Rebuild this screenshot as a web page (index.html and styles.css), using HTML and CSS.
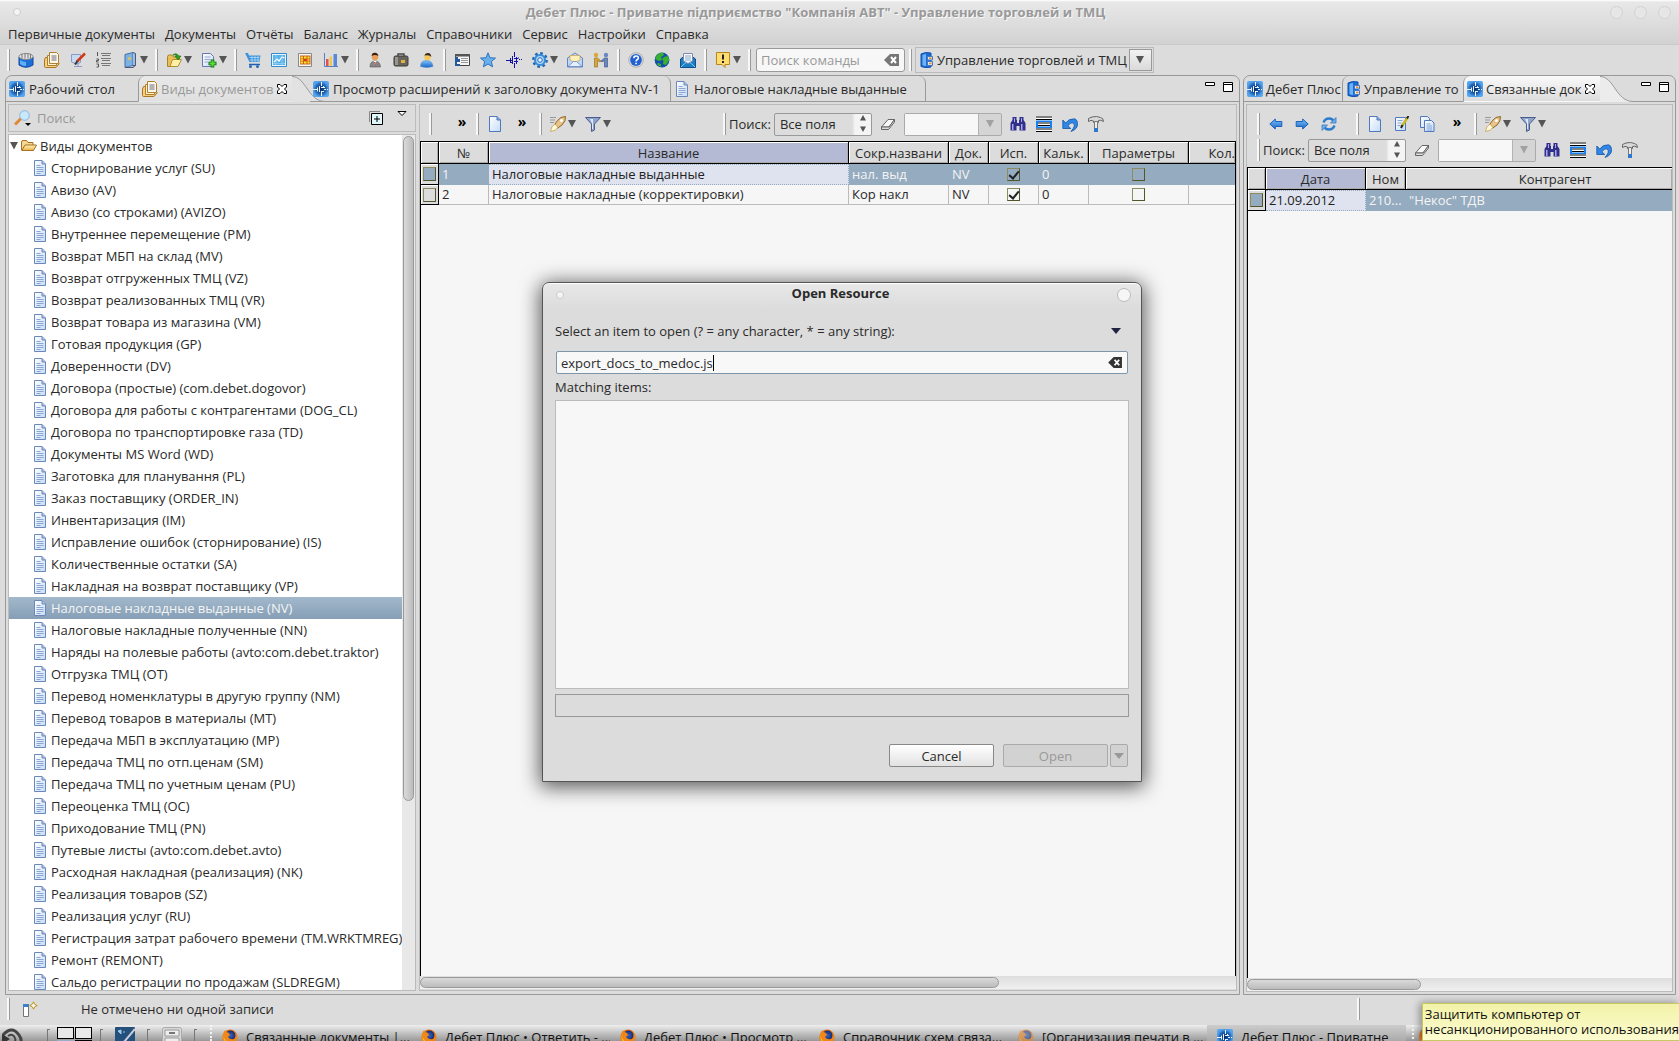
FILE: index.html
```html
<!DOCTYPE html>
<html lang="ru">
<head>
<meta charset="utf-8">
<title>Дебет Плюс - Управление торговлей и ТМЦ</title>
<link rel="stylesheet" href="styles.css">
</head>
<body>
<svg class="sprite" aria-hidden="true">
  <defs>
    <linearGradient id="g-blue" x1="0" y1="0" x2="0" y2="1"><stop offset="0" stop-color="#7cc4fa"/><stop offset="1" stop-color="#1a62c8"/></linearGradient>
    <linearGradient id="g-page" x1="0" y1="0" x2="1" y2="1"><stop offset="0" stop-color="#ffffff"/><stop offset="1" stop-color="#c4dcf8"/></linearGradient>
    <linearGradient id="g-gold" x1="0" y1="0" x2="0" y2="1"><stop offset="0" stop-color="#fff3c0"/><stop offset="1" stop-color="#e8b248"/></linearGradient>
    <radialGradient id="g-logo"><stop offset="0" stop-color="#0a2c66"/><stop offset=".6" stop-color="#1d5fb0"/><stop offset="1" stop-color="#55a4ee"/></radialGradient>
    <radialGradient id="g-fox"><stop offset="0" stop-color="#3c62c0"/><stop offset="1" stop-color="#152a6c"/></radialGradient>
  </defs>
  <symbol id="i-logo" viewBox="0 0 16 16"><rect width="16" height="16" rx="2" fill="url(#g-logo)"/><path d="M8.500 1v4M8.500 11v4M0 8.500h5M6.500 5v6M4.500 6.500v4M11 8.500h2M14 8.500h1M8 6.500h4M8 10.500h3M10.500 5v2" stroke="#e8f4ff" stroke-width="1" fill="none"/></symbol>
  <symbol id="i-drum" viewBox="0 0 16 16"><path d="M1 5v8q7 4.500 14 0V5z" fill="#1b6fd6" stroke="#0d47a0"/><path d="M2 8q3 2 6 2v4q-4 0-6-2z" fill="#5fb0f6"/><ellipse cx="8" cy="4.500" rx="7" ry="3" fill="#e4e4e4" stroke="#888"/><path d="M4 2v4M7 1.500v5M10 1.500v5M12.500 2v4" stroke="#777"/></symbol>
  <symbol id="i-docs" viewBox="0 0 16 16"><path d="M3.500 5.500H1.500L.5 8v6.500q0 1 1 1h10.500l3.500-4" fill="#f7cf7c" stroke="#a8762a"/><path d="M3.500 3.500h3v8h6v2h-9z" fill="#fff0d0" stroke="#b08030"/><path d="M5.500.5h7l2 2v9h-9z" fill="#fff8e8" stroke="#b08030"/><path d="M7.500 4h5M7.500 6h5M7.500 8h5" stroke="#6a6a80"/></symbol>
  <symbol id="i-edit" viewBox="0 0 16 16"><path d="M1.500 2.500h9v8l-4 1.500-5-2z" fill="#c8daf2" stroke="#8a9cc8"/><path d="M4 14.500h8M8 11v3" stroke="#8a9cc8"/><path d="M15 1.500L7 9.500" stroke="#d03818" stroke-width="2.500"/><path d="M7.500 9L5 12.500" stroke="#333" stroke-width="2"/></symbol>
  <symbol id="i-list" viewBox="0 0 16 16"><path d="M5 1.500h10M6 3.500h8M5 6.500h10M6 8.500h8M5 11.500h10M6 13.500h8" stroke="#777"/><path d="M1.500 0v4M.5 7h2v1.500h-2V10h2M.5 12h2v3h-2" stroke="#555" fill="none"/></symbol>
  <symbol id="i-book" viewBox="0 0 16 16"><path d="M3 2.500l8-2v13l-8 2z" fill="#7fb2e0" stroke="#3a6ea8"/><path d="M11 .5l2.500 1v12l-2.500 0M3 15.500h8l2.500-2" fill="#9cc0e4" stroke="#557"/><circle cx="7.500" cy="6.500" r="1.600" fill="#e8c050"/></symbol>
  <symbol id="i-open" viewBox="0 0 16 16"><path d="M1.500 4.500q0-1.500 2-1.500h3l1 2h6v3l-9 6.500h-3z" fill="#e9bf55" stroke="#a8842c"/><path d="M4 14.500l2.500-7h9l-3.500 7z" fill="#fff0a8" stroke="#b09030"/><path d="M7 3q3-3 6 1h2l-3 4-3-4h2q-2-2-4-1z" fill="#30a020" stroke="#187010" stroke-width=".6"/></symbol>
  <symbol id="i-new" viewBox="0 0 16 16"><path d="M1.500 1.500h8l3 3v10h-11z" fill="url(#g-page)" stroke="#6878b0"/><path d="M3.500 5h6M3.500 7.500h6M3.500 10h4" stroke="#98a8d0"/><path d="M11.500 7.500v8M7.500 11.500h8" stroke="#157010" stroke-width="3.600"/><path d="M11.500 8.500v6M8.500 11.500h6" stroke="#58dc40" stroke-width="2"/></symbol>
  <symbol id="i-cart" viewBox="0 0 16 16"><path d="M0 1h3l1 2.500h11.500l-1 6.500H4.500z" fill="#3f92da"/><path d="M4.500 5.500h10M5 8h9.500M7 4v6M10 4v6M13 4v6" stroke="#bfe2fa" stroke-width=".7"/><path d="M4 12.500h11" stroke="#1c62b0" stroke-width="1.500"/><circle cx="5.500" cy="14.500" r="1.500" fill="#2a6ab8"/><circle cx="12.500" cy="14.500" r="1.500" fill="#2a6ab8"/></symbol>
  <symbol id="i-chart" viewBox="0 0 16 16"><path d="M.5 1.500h15v13H.5z" fill="#e4f4fe" stroke="#3a8ad0"/><path d="M2 3h12v10H2z" fill="#5ab4ec"/><path d="M3 10l3-3 2 2 3-4 2.500 1" stroke="#fff" fill="none" stroke-width="1.200"/><path d="M2 11.500h12M5 3v10M11 3v10" stroke="#a4d8f8" fill="none" stroke-width=".6"/></symbol>
  <symbol id="i-grid" viewBox="0 0 16 16"><path d="M1.500 1.500h13v13h-13z" fill="#f8f8f8" stroke="#888"/><path d="M3 3.500h10.500v9H3z" fill="#c86018"/><path d="M3.500 4.500h2.500v2H3.500zM7 4.500h2.500v2H7zM10.500 4.500h2v2h-2zM3.500 9.500h2.500v2H3.500zM7 9.500h2.500v2H7zM10.500 9.500h2v2h-2z" fill="#ffe030"/><path d="M3.500 7.300h2.500v1.400H3.500zM10.500 7.300h2v1.400h-2z" fill="#ffe030"/><path d="M7 7.300h2.500v1.400H7z" fill="#e02818"/></symbol>
  <symbol id="i-bars" viewBox="0 0 16 16"><path d="M1.500 1v13.500H15" stroke="#5a80c0" fill="none"/><path d="M3 7h2.500v7H3z" fill="#e05050"/><path d="M6.500 4.500H9V14H6.500z" fill="#f0c850"/><path d="M10.500 2h3.500v12h-3.500z" fill="#5888d8"/></symbol>
  <symbol id="i-man" viewBox="0 0 16 16"><path d="M3 15q0-6 5-6t5.500 6z" fill="#868686" stroke="#555" stroke-width=".6"/><path d="M6.500 9h3L8 13z" fill="#fff"/><circle cx="8" cy="5" r="3.300" fill="#e8a058"/><path d="M4.600 4Q5 .5 8 .8t3.400 3.200Q8 2 4.600 4z" fill="#3a2010"/><path d="M7 10h1.500v4z" fill="#c03020"/></symbol>
  <symbol id="i-bag" viewBox="0 0 16 16"><path d="M5 4V2h6v2" fill="none" stroke="#444" stroke-width="1.400"/><rect x="1" y="4" width="14" height="10" rx="1.500" fill="#68645e" stroke="#3c3a38"/><path d="M2 5h3v8H2z" fill="#99958c"/><path d="M8 8h4v3H8z" fill="#e0b040"/></symbol>
  <symbol id="i-user" viewBox="0 0 16 16"><path d="M1.500 14.500q0-6 6-6t6.500 6q-6 2-12.500 0z" fill="url(#g-blue)" stroke="#5590c8" stroke-width=".6"/><circle cx="8.500" cy="5" r="3.200" fill="#f4c858"/><path d="M5.500 3.500Q6 1 9 1t3.300 4Q11 2.500 5.500 3.500z" fill="#352a20"/></symbol>
  <symbol id="i-form" viewBox="0 0 16 16"><path d="M1.500 2.500h14v11h-14z" fill="#f4f4f4" stroke="#444"/><path d="M1 2h15v2.500H1z" fill="#555"/><path d="M7 6.500h7M7 8.500h7M7 10.500h7" stroke="#999"/><path d="M1 5h3v2h2v3H3v2h3v2H1z" fill="#28589c"/></symbol>
  <symbol id="i-star" viewBox="0 0 16 16"><path d="M8 .8l2 5 5.500.3-4.200 3.500 1.300 5.200L8 12l-4.600 2.800 1.300-5.200L.5 6.100 6 5.800z" fill="#6ab0ec" stroke="#2c72bc"/></symbol>
  <symbol id="i-pulse" viewBox="0 0 16 16"><path d="M8.500 0v5M8.500 11v5M0 8.500h6M4.500 6v5M6.500 4v8M10.500 5v7M8 6.500h4M8 9.500h4M13 7.500h1M15 7.500h1M5 10.500h2M12.500 5.500v1" stroke="#1414a0" fill="none"/></symbol>
  <symbol id="i-gear" viewBox="0 0 16 16"><circle cx="8" cy="8" r="6.600" fill="none" stroke="#1c66b4" stroke-width="2.600" stroke-dasharray="2.600 2.580"/><circle cx="8" cy="8" r="5" fill="#b4dcfa" stroke="#3a8cd8" stroke-width="2.200"/><circle cx="8" cy="8" r="2.300" fill="#e8f4ff" stroke="#1c66b4"/></symbol>
  <symbol id="i-mail" viewBox="0 0 16 16"><path d="M.5 6L8 1l7.500 5v9H.5z" fill="#bcd8f8" stroke="#6484c4"/><path d="M3 3.500h10V8L8 10.500 3 8z" fill="#fff0b8" stroke="#c8a050" stroke-width=".7"/><path d="M1 14.500L6.500 9.500h3l5.500 5z" fill="#e4f0fe" stroke="#6484c4" stroke-width=".8"/></symbol>
  <symbol id="i-people" viewBox="0 0 16 16"><circle cx="3" cy="3" r="2.200" fill="#d8a838"/><circle cx="13" cy="3" r="2.200" fill="#6888c0"/><path d="M1.500 6h3l3.500 3-1 1-2.500-1.500V15h-3z" fill="#d8a838" stroke="#8a6818" stroke-width=".6"/><path d="M14.500 6h-3L8 9l1 1 2.500-1.500V15h3z" fill="#6888c0" stroke="#384c80" stroke-width=".6"/></symbol>
  <symbol id="i-help" viewBox="0 0 16 16"><circle cx="8" cy="8" r="7.200" fill="#e8e8e8" stroke="#aaa"/><circle cx="8" cy="8" r="5.900" fill="#2060d0"/><path d="M5.800 6.300q0-2.300 2.300-2.300t2.200 2q0 1.200-1.300 1.800-.9.500-.9 1.700M8.100 10.700v1.600" stroke="#fff" stroke-width="1.600" fill="none"/></symbol>
  <symbol id="i-globe" viewBox="0 0 16 16"><circle cx="8" cy="8" r="7.400" fill="#1450a8"/><path d="M3 3q3-3 6-2l1 2-3 2 1 3-3 1-4-2zM10 5l4-1 1.300 4-3.300 5-3-1 .5-3-1.500-2zM4 11l3 1v3q-3-1-4-3z" fill="#38b030"/></symbol>
  <symbol id="i-mail2" viewBox="0 0 16 16"><path d="M.5 7L8 1.500 15.500 7v8.500H.5z" fill="#1c7cc4" stroke="#0c5090"/><path d="M3.500 1.500h9V9L8 11.500 3.500 9z" fill="#f4faff" stroke="#88a"/><path d="M5 4h6M5 6h6M5 8h6" stroke="#88a8c8"/><path d="M1 15l5.500-5M15 15l-5.500-5" stroke="#8ccaf4"/></symbol>
  <symbol id="i-warn" viewBox="0 0 16 16"><path d="M1.500.5h13v12H10v3l-3-3H1.500z" fill="#ffdc70" stroke="#b88420"/><path d="M8 2.500v5M8 9v2" stroke="#222" stroke-width="2"/></symbol>
  <symbol id="i-down" viewBox="0 0 8 8"><path d="M0 0h8L4 7.500z" fill="#555"/></symbol>
  <symbol id="i-flat" viewBox="0 0 10 6"><path d="M0 0h10L5 6z" fill="currentColor"/></symbol>
  <symbol id="i-clear" viewBox="0 0 16 12"><path d="M6 0h9v12H6L0 6z" fill="currentColor"/><path d="M7 3l5 6M12 3L7 9" stroke="#fff" stroke-width="2"/></symbol>
  <symbol id="i-cab" viewBox="0 0 16 16"><path d="M2 2q4-2.500 10-1V15q-5 1.500-10-.5z" fill="#1c6cd8" stroke="#1050a8"/><path d="M3.500 3q2-1 3.500-1v12q-2 0-3.500-1z" fill="#6cb4f8"/><path d="M8.500 4.500h5v3.500h-5zM8.500 9.500h5v4h-5z" fill="#dce8f8" stroke="#4878c0"/><path d="M10 11.500h2.500M10 6.300h2.500" stroke="#e89020" stroke-width="1.400"/></symbol>
  <symbol id="i-page" viewBox="0 0 16 16"><path d="M2.500.5h7.500l3.500 3.500v11.500h-11z" fill="url(#g-page)" stroke="#6c88b8"/><path d="M10 .5V4h3.500" fill="#a8c0e4" stroke="#6c88b8"/><path d="M4.500 5.500h4M4.500 7.500h7M4.500 9.500h7M4.500 11.500h7M4.500 13.500h4" stroke="#8ca4d0"/></symbol>
  <symbol id="i-blank" viewBox="0 0 16 16"><path d="M2.500.5h7.500l3.500 3.500v11.500h-11z" fill="url(#g-page)" stroke="#5078c0"/><path d="M10 .5V4h3.500" fill="#80a8e4" stroke="#5078c0"/></symbol>
  <symbol id="i-write" viewBox="0 0 16 16"><path d="M2.500 1.500h10v13h-10z" fill="url(#g-page)" stroke="#5078c0"/><path d="M4.500 4.500h5M4.500 7h4M4.500 9.500h3" stroke="#8ca4d0"/><path d="M14.500 1.500L9 10" stroke="#c8b820" stroke-width="2.500"/><path d="M15.500 0L14 2.500M9.500 9L8 12" stroke="#222" stroke-width="2"/></symbol>
  <symbol id="i-copy" viewBox="0 0 16 16"><path d="M1.500.5h7l2 2v9h-9z" fill="url(#g-page)" stroke="#5078c0"/><path d="M5.500 4.500h7l2.500 2.500v8.500H5.500z" fill="url(#g-page)" stroke="#5078c0"/><path d="M7.500 8h4M7.500 10h5.500M7.500 12h5.500M7.500 14h5.500" stroke="#7c98d0" stroke-width=".9"/></symbol>
  <symbol id="i-folder" viewBox="0 0 16 16"><path d="M.5 12V4q0-1.500 1.500-1.500h3.500l1.500 2h5V7" fill="#f8d890" stroke="#a87020"/><path d="M.8 12.500L4 7h11.500l-3 5.500z" fill="url(#g-gold)" stroke="#a87020"/></symbol>
  <symbol id="i-search" viewBox="0 0 18 16"><path d="M1 14.500l6-6" stroke="#e08830" stroke-width="3"/><circle cx="10.500" cy="5.500" r="4.800" fill="#c8e8fc" stroke="#8cb4dc"/><path d="M11 13h6l-3 3z" fill="#000"/></symbol>
  <symbol id="i-plus" viewBox="0 0 14 14"><path d="M.5 11V.5H11" fill="none" stroke="#888"/><path d="M2.500 2.500h11v11h-11z" fill="#e0f8fc" stroke="#000"/><path d="M5 8h6M8 5v6" stroke="#000"/></symbol>
  <symbol id="i-menu" viewBox="0 0 10 6"><path d="M1 .5h8L5 4.500z" fill="#fff" stroke="#000"/></symbol>
  <symbol id="i-close" viewBox="0 0 12 12"><path d="M1.500 1.500h2.500l2 2 2-2h2.500V4l-2 2 2 2v2.500H8l-2-2-2 2H1.500V8l2-2-2-2z" fill="#fff" stroke="#000"/></symbol>
  <symbol id="i-min" viewBox="0 0 10 10"><path d="M.5.5h9v3h-9z" fill="#fff" stroke="#000"/></symbol>
  <symbol id="i-max" viewBox="0 0 10 10"><path d="M.5.5h9v9h-9z" fill="#fff" stroke="#000"/><path d="M0 2.500h10" stroke="#000"/></symbol>
  <symbol id="i-rocket" viewBox="0 0 16 16"><path d="M0 1.500h6M0 4h5M0 6.500h4" stroke="#999"/><path d="M15.500.5q-5 0-8 4L4 9.500l3 3L12 9q4-4 3.500-8.500z" fill="#e8c488" stroke="#8c6428"/><circle cx="11.500" cy="4.500" r="1.500" fill="#fff"/><path d="M5 8q-4 2-4.500 7.500Q6 15 8 11.500z" fill="#fff8dc" stroke="#c09440" stroke-width=".7"/></symbol>
  <symbol id="i-filter" viewBox="0 0 16 16"><path d="M.5 1.500h15l-6 6.500v6l-3 1.500V8z" fill="#8ea4cc" stroke="#4c5c8c"/><path d="M5 3h3v10h-1V7.500z" fill="#dce8f8"/></symbol>
  <symbol id="i-eraser" viewBox="0 0 16 16"><path d="M1.500 11L8 3.500h6.500L9 11z" fill="#f8f8f8" stroke="#666"/><path d="M1.500 11v2.500H8.500L14.500 6V3.500L9 11H1.500" fill="#ddd" stroke="#666"/></symbol>
  <symbol id="i-binoc" viewBox="0 0 16 16"><path d="M2.500 1h4v3H7v3h2V4h.5V1h4v3l2 3v7.500H9.500V10h-3v4.500H.5V7l2-3z" fill="#30308c"/><path d="M2 8h1.500v6H2zM11 8h1.500v6H11zM4 2h1v4H4zM11 2h1v4h-1z" fill="#a8a8e8"/></symbol>
  <symbol id="i-rows" viewBox="0 0 16 16"><path d="M0 0h16v16H0z" fill="#fff"/><path d="M0 1h16M0 3.500h16M0 13h16M0 15.500h16" stroke="#000"/><path d="M0 4.500h16v7.500H0z" fill="#1880f0"/><path d="M2 6h12v4.500H2z" fill="#fff"/><path d="M2 7h12M2 9.500h12" stroke="#000"/></symbol>
  <symbol id="i-undo" viewBox="0 0 16 16"><path d="M.8 4v8.500h8L6 9.800Q9 5.500 11.500 7.500T9 15.500q7-2.500 6.500-8T11 3Q7 2.500 3.800 7z" fill="#2f86e4" stroke="#1456a8" stroke-width=".8"/></symbol>
  <symbol id="i-hammer" viewBox="0 0 16 16"><path d="M.5 5.500V2.500q3-2 8-2l4 1q3 .5 3 4-3-2-5-1v2H5.500v-1.500Q3 3.500 .5 5.500z" fill="#d8d8d8" stroke="#666"/><path d="M6.500 5.500h3V13h-3z" fill="#eee" stroke="#777"/><path d="M6 12h4v4H6z" fill="#2f78d0"/></symbol>
  <symbol id="i-left" viewBox="0 0 16 16"><path d="M1.800 8l5.500-5V5.500h6.500v5H7.300V13z" fill="url(#g-blue)" stroke="#1c62b8"/></symbol>
  <symbol id="i-right" viewBox="0 0 16 16"><path d="M14.200 8l-5.500-5V5.500H2.200v5h6.500V13z" fill="url(#g-blue)" stroke="#1c62b8"/></symbol>
  <symbol id="i-refresh" viewBox="0 0 16 16"><path d="M2.500 6.500Q4 2.500 8 2.500t4.500 3M13.500 9.500q-1.500 4-5.500 4t-4.500-3" fill="none" stroke="#2c7ccc" stroke-width="2.400"/><path d="M15 1.500v5.500H9.500zM1 14.500V9h5.500z" fill="#6cb4f0" stroke="#2c6cb8" stroke-width=".7"/></symbol>
  <symbol id="i-fox" viewBox="0 0 16 16"><circle cx="8" cy="8" r="7.500" fill="#e87010"/><circle cx="8.500" cy="6.500" r="5" fill="url(#g-fox)"/><path d="M1 5l2-4 1 2q3 0 4 3L6 8q2 3 6 2 3-2 1-7 4 5 1 9t-9 3-4-10z" fill="#f08818"/><path d="M1.500 6q0 6 6 8-6 0-6-8z" fill="#ffd840"/></symbol>
  <symbol id="i-addcol" viewBox="0 0 16 16"><path d="M1.500 3.500h5v12h-5z" fill="#fff" stroke="#777"/><path d="M1 3h6v3H1z" fill="#3c80c8"/><path d="M11.500.8l1.200 2.500 2.500 1.200-2.500 1.200-1.200 2.500-1.200-2.500L7.800 4.500l2.500-1.200z" fill="#fff" stroke="#c09010"/></symbol>
  <symbol id="i-spin" viewBox="0 0 6 18"><path d="M0 5.500h6L3 0zM0 11.500h6L3 17z" fill="#555"/></symbol>
</svg>

<div class="app">
  <header class="top">
    <div class="titlebar"><i class="dot"></i><h1>Дебет Плюс - Приватне підприємство "Компанія АВТ" - Управление торговлей и ТМЦ</h1><span class="wbtns"><i></i><i></i><i></i></span></div>
    <nav class="menu"><a href="#">Первичные документы</a><a href="#">Документы</a><a href="#">Отчёты</a><a href="#">Баланс</a><a href="#">Журналы</a><a href="#">Справочники</a><a href="#">Сервис</a><a href="#">Настройки</a><a href="#">Справка</a></nav>
  </header>

  <div class="tools">
    <i class="grip"></i>
    <button class="tb" aria-label="База"><svg><use href="#i-drum"/></svg></button>
    <button class="tb" aria-label="Виды документов"><svg><use href="#i-docs"/></svg></button>
    <button class="tb" aria-label="Правка"><svg><use href="#i-edit"/></svg></button>
    <button class="tb" aria-label="Список"><svg><use href="#i-list"/></svg></button>
    <button class="tb split" aria-label="Справочник"><svg><use href="#i-book"/></svg><svg class="dn"><use href="#i-down"/></svg></button>
    <i class="grip"></i>
    <button class="tb split" aria-label="Открыть"><svg><use href="#i-open"/></svg><svg class="dn"><use href="#i-down"/></svg></button>
    <button class="tb split" aria-label="Создать"><svg><use href="#i-new"/></svg><svg class="dn"><use href="#i-down"/></svg></button>
    <i class="grip"></i>
    <button class="tb" aria-label="Торговля"><svg><use href="#i-cart"/></svg></button>
    <button class="tb" aria-label="График"><svg><use href="#i-chart"/></svg></button>
    <button class="tb" aria-label="Таблица"><svg><use href="#i-grid"/></svg></button>
    <button class="tb split" aria-label="Диаграмма"><svg><use href="#i-bars"/></svg><svg class="dn"><use href="#i-down"/></svg></button>
    <i class="grip"></i>
    <button class="tb" aria-label="Сотрудник"><svg><use href="#i-man"/></svg></button>
    <button class="tb" aria-label="Портфель"><svg><use href="#i-bag"/></svg></button>
    <button class="tb" aria-label="Пользователь"><svg><use href="#i-user"/></svg></button>
    <i class="grip"></i>
    <button class="tb" aria-label="Форма"><svg><use href="#i-form"/></svg></button>
    <button class="tb" aria-label="Избранное"><svg><use href="#i-star"/></svg></button>
    <button class="tb" aria-label="Дебет"><svg><use href="#i-pulse"/></svg></button>
    <button class="tb split" aria-label="Параметры"><svg><use href="#i-gear"/></svg><svg class="dn"><use href="#i-down"/></svg></button>
    <button class="tb" aria-label="Почта"><svg><use href="#i-mail"/></svg></button>
    <button class="tb" aria-label="Контрагенты"><svg><use href="#i-people"/></svg></button>
    <i class="grip"></i>
    <button class="tb" aria-label="Помощь"><svg><use href="#i-help"/></svg></button>
    <button class="tb" aria-label="Сайт"><svg><use href="#i-globe"/></svg></button>
    <button class="tb" aria-label="Письмо"><svg><use href="#i-mail2"/></svg></button>
    <i class="grip"></i>
    <button class="tb split" aria-label="Уведомления"><svg><use href="#i-warn"/></svg><svg class="dn"><use href="#i-down"/></svg></button>
    <i class="grip"></i>
    <div class="cmd"><input type="text" placeholder="Поиск команды" aria-label="Поиск команды"><svg><use href="#i-clear"/></svg></div>
    <i class="grip"></i>
    <div class="persp"><svg class="ic"><use href="#i-cab"/></svg><span>Управление торговлей и ТМЦ</span><button aria-label="Выбрать"><svg class="dn"><use href="#i-down"/></svg></button></div>
  </div>

  <main class="work">
    <section class="folder main">
      <div class="tabs">
        <button class="tab t1"><svg class="ic"><use href="#i-logo"/></svg>Рабочий стол</button>
        <button class="tab on t2"><svg class="ic"><use href="#i-docs"/></svg><span class="dim">Виды документов</span><svg class="x"><use href="#i-close"/></svg></button>
        <svg class="curve" viewBox="0 0 33 26" preserveAspectRatio="none"><path d="M0 .5C14 .5 16 25.500 33 25.500V27H0z" fill="#e2e2e2"/><path d="M0 .5C14 .5 16 25.500 33 25.500" fill="none" stroke="#999"/></svg>
        <button class="tab t3"><svg class="ic"><use href="#i-logo"/></svg>Просмотр расширений к заголовку документа NV-1</button>
        <button class="tab t4"><svg class="ic"><use href="#i-page"/></svg>Налоговые накладные выданные</button>
        <span class="mm"><svg><use href="#i-min"/></svg><svg><use href="#i-max"/></svg></span>
      </div>
      <div class="body">
        <aside class="left">
          <div class="find"><svg class="mag"><use href="#i-search"/></svg><input type="text" placeholder="Поиск" aria-label="Поиск"><svg class="plus"><use href="#i-plus"/></svg><svg class="vm"><use href="#i-menu"/></svg></div>
          <div class="treebox">
            <ul class="tree">
              <li class="root"><svg class="dn"><use href="#i-down"/></svg><svg class="ic"><use href="#i-folder"/></svg>Виды документов</li>
              <li><svg class="ic"><use href="#i-page"/></svg>Сторнирование услуг (SU)</li>
              <li><svg class="ic"><use href="#i-page"/></svg>Авизо (AV)</li>
              <li><svg class="ic"><use href="#i-page"/></svg>Авизо (со строками) (AVIZO)</li>
              <li><svg class="ic"><use href="#i-page"/></svg>Внутреннее перемещение (PM)</li>
              <li><svg class="ic"><use href="#i-page"/></svg>Возврат МБП на склад (MV)</li>
              <li><svg class="ic"><use href="#i-page"/></svg>Возврат отгруженных ТМЦ (VZ)</li>
              <li><svg class="ic"><use href="#i-page"/></svg>Возврат реализованных ТМЦ (VR)</li>
              <li><svg class="ic"><use href="#i-page"/></svg>Возврат товара из магазина (VM)</li>
              <li><svg class="ic"><use href="#i-page"/></svg>Готовая продукция (GP)</li>
              <li><svg class="ic"><use href="#i-page"/></svg>Доверенности (DV)</li>
              <li><svg class="ic"><use href="#i-page"/></svg>Договора (простые) (com.debet.dogovor)</li>
              <li><svg class="ic"><use href="#i-page"/></svg>Договора для работы с контрагентами (DOG_CL)</li>
              <li><svg class="ic"><use href="#i-page"/></svg>Договора по транспортировке газа (TD)</li>
              <li><svg class="ic"><use href="#i-page"/></svg>Документы MS Word (WD)</li>
              <li><svg class="ic"><use href="#i-page"/></svg>Заготовка для планування (PL)</li>
              <li><svg class="ic"><use href="#i-page"/></svg>Заказ поставщику (ORDER_IN)</li>
              <li><svg class="ic"><use href="#i-page"/></svg>Инвентаризация (IM)</li>
              <li><svg class="ic"><use href="#i-page"/></svg>Исправление ошибок (сторнирование) (IS)</li>
              <li><svg class="ic"><use href="#i-page"/></svg>Количественные остатки (SA)</li>
              <li><svg class="ic"><use href="#i-page"/></svg>Накладная на возврат поставщику (VP)</li>
              <li class="sel"><svg class="ic"><use href="#i-page"/></svg>Налоговые накладные выданные (NV)</li>
              <li><svg class="ic"><use href="#i-page"/></svg>Налоговые накладные полученные (NN)</li>
              <li><svg class="ic"><use href="#i-page"/></svg>Наряды на полевые работы (avto:com.debet.traktor)</li>
              <li><svg class="ic"><use href="#i-page"/></svg>Отгрузка ТМЦ (OT)</li>
              <li><svg class="ic"><use href="#i-page"/></svg>Перевод номенклатуры в другую группу (NM)</li>
              <li><svg class="ic"><use href="#i-page"/></svg>Перевод товаров в материалы (MT)</li>
              <li><svg class="ic"><use href="#i-page"/></svg>Передача МБП в эксплуатацию (MP)</li>
              <li><svg class="ic"><use href="#i-page"/></svg>Передача ТМЦ по отп.ценам (SM)</li>
              <li><svg class="ic"><use href="#i-page"/></svg>Передача ТМЦ по учетным ценам (PU)</li>
              <li><svg class="ic"><use href="#i-page"/></svg>Переоценка ТМЦ (OC)</li>
              <li><svg class="ic"><use href="#i-page"/></svg>Приходование ТМЦ (PN)</li>
              <li><svg class="ic"><use href="#i-page"/></svg>Путевые листы (avto:com.debet.avto)</li>
              <li><svg class="ic"><use href="#i-page"/></svg>Расходная накладная (реализация) (NK)</li>
              <li><svg class="ic"><use href="#i-page"/></svg>Реализация товаров (SZ)</li>
              <li><svg class="ic"><use href="#i-page"/></svg>Реализация услуг (RU)</li>
              <li><svg class="ic"><use href="#i-page"/></svg>Регистрация затрат рабочего времени (TM.WRKTMREG)</li>
              <li><svg class="ic"><use href="#i-page"/></svg>Ремонт (REMONT)</li>
              <li><svg class="ic"><use href="#i-page"/></svg>Сальдо регистрации по продажам (SLDREGM)</li>
            </ul>
            <div class="vbar"><i></i></div>
          </div>
        </aside>
        <section class="mid">
          <div class="bar">
            <i class="grip"></i><button class="more gap">»</button>
            <i class="grip"></i><button class="tb" aria-label="Новый"><svg><use href="#i-blank"/></svg></button><button class="more">»</button>
            <i class="grip"></i>
            <button class="tb split" aria-label="Запуск"><svg><use href="#i-rocket"/></svg><svg class="dn"><use href="#i-down"/></svg></button>
            <button class="tb split" aria-label="Фильтр"><svg><use href="#i-filter"/></svg><svg class="dn"><use href="#i-down"/></svg></button>
            <span class="push"></span>
            <i class="grip"></i><label for="f1">Поиск:</label>
            <span class="sel-wrap"><select id="f1"><option>Все поля</option></select><svg><use href="#i-spin"/></svg></span>
            <button class="tb er" aria-label="Очистить"><svg><use href="#i-eraser"/></svg></button>
            <span class="combo"><input type="text" aria-label="Значение"><button disabled aria-label="Список"><svg class="dn"><use href="#i-down"/></svg></button></span>
            <button class="tb" aria-label="Найти"><svg><use href="#i-binoc"/></svg></button>
            <button class="tb" aria-label="Строки"><svg><use href="#i-rows"/></svg></button>
            <button class="tb" aria-label="Отменить"><svg><use href="#i-undo"/></svg></button>
            <button class="tb" aria-label="Настройка"><svg><use href="#i-hammer"/></svg></button>
          </div>
          <div class="grid">
            <table>
              <colgroup><col class="c18"><col class="c50"><col><col class="c100"><col class="c40"><col class="c50"><col class="c50"><col class="c100"><col class="c46"></colgroup>
              <thead><tr><th></th><th>№</th><th class="key">Название</th><th>Сокр.названи</th><th>Док.</th><th>Исп.</th><th>Кальк.</th><th>Параметры</th><th class="cut">Кол.</th></tr></thead>
              <tbody>
                <tr class="sel"><td class="rh"><i></i></td><td>1</td><td class="cell">Налоговые накладные выданные</td><td>нал. выд</td><td>NV</td><td class="c"><input type="checkbox" checked aria-label="Исп."></td><td>0</td><td class="c"><input type="checkbox" aria-label="Параметры"></td><td></td></tr>
                <tr><td class="rh"><i></i></td><td>2</td><td>Налоговые накладные (корректировки)</td><td>Кор накл</td><td>NV</td><td class="c"><input type="checkbox" checked aria-label="Исп."></td><td>0</td><td class="c"><input type="checkbox" aria-label="Параметры"></td><td></td></tr>
              </tbody>
            </table>
          </div>
          <div class="hbar"><i class="h1"></i></div>
        </section>
      </div>
    </section>

    <section class="folder side">
      <div class="tabs">
        <button class="tab s1"><svg class="ic"><use href="#i-logo"/></svg>Дебет Плюс</button>
        <button class="tab s2"><svg class="ic"><use href="#i-cab"/></svg>Управление то</button>
        <button class="tab on s3"><svg class="ic"><use href="#i-logo"/></svg>Связанные док<svg class="x"><use href="#i-close"/></svg></button>
        <svg class="curve" viewBox="0 0 33 26" preserveAspectRatio="none"><path d="M0 .5C14 .5 16 25.500 33 25.500V27H0z" fill="#ececec"/><path d="M0 .5C14 .5 16 25.500 33 25.500" fill="none" stroke="#999"/></svg>
        <span class="mm"><svg><use href="#i-min"/></svg><svg><use href="#i-max"/></svg></span>
      </div>
      <div class="rbody">
        <div class="bar rb">
          <i class="grip"></i>
          <button class="tb" aria-label="Назад"><svg><use href="#i-left"/></svg></button>
          <button class="tb" aria-label="Вперёд"><svg><use href="#i-right"/></svg></button>
          <button class="tb wide" aria-label="Обновить"><svg><use href="#i-refresh"/></svg></button>
          <i class="grip"></i>
          <button class="tb" aria-label="Новый"><svg><use href="#i-blank"/></svg></button>
          <button class="tb" aria-label="Изменить"><svg><use href="#i-write"/></svg></button>
          <button class="tb" aria-label="Копировать"><svg><use href="#i-copy"/></svg></button>
          <button class="more">»</button>
          <i class="grip"></i>
          <button class="tb split" aria-label="Запуск"><svg><use href="#i-rocket"/></svg><svg class="dn"><use href="#i-down"/></svg></button>
          <button class="tb split" aria-label="Фильтр"><svg><use href="#i-filter"/></svg><svg class="dn"><use href="#i-down"/></svg></button>
        </div>
        <div class="bar rb second">
          <i class="grip"></i><label for="f2">Поиск:</label>
          <span class="sel-wrap"><select id="f2"><option>Все поля</option></select><svg><use href="#i-spin"/></svg></span>
          <button class="tb er" aria-label="Очистить"><svg><use href="#i-eraser"/></svg></button>
          <span class="combo"><input type="text" aria-label="Значение"><button disabled aria-label="Список"><svg class="dn"><use href="#i-down"/></svg></button></span>
          <button class="tb" aria-label="Найти"><svg><use href="#i-binoc"/></svg></button>
          <button class="tb" aria-label="Строки"><svg><use href="#i-rows"/></svg></button>
          <button class="tb" aria-label="Отменить"><svg><use href="#i-undo"/></svg></button>
          <button class="tb" aria-label="Настройка"><svg><use href="#i-hammer"/></svg></button>
        </div>
        <div class="grid open">
          <table>
            <colgroup><col class="c18"><col class="c100"><col class="c40"><col></colgroup>
            <thead><tr><th></th><th class="key">Дата</th><th>Ном</th><th class="wideh">Контрагент</th></tr></thead>
            <tbody><tr class="sel"><td class="rh"><i></i></td><td class="cell">21.09.2012</td><td>210...</td><td>"Некос" ТДВ</td></tr></tbody>
          </table>
        </div>
        <div class="hbar"><i class="h2"></i></div>
      </div>
    </section>
  </main>

  <footer class="status"><i class="grip"></i><svg class="ic"><use href="#i-addcol"/></svg><span class="msg">Не отмечено ни одной записи</span><i class="grip"></i><span class="rest"></span></footer>

  <div class="taskbar">
    <div class="launch">
      <svg class="deb" viewBox="0 0 24 24"><path d="M3 8Q12-2 19 8t-9 15" fill="none" stroke="#444" stroke-width="3"/><path d="M8 9q5-3 7 2t-6 6" fill="none" stroke="#444" stroke-width="2"/><path d="M2 7l8 5-8 5z" fill="#333"/></svg>
      <i class="brk"></i>
      <span class="pager"><i></i><i></i><i class="cur"></i><i></i></span>
      <i class="brk"></i>
      <svg class="q" viewBox="0 0 20 20"><rect width="20" height="20" rx="1" fill="#24507c"/><path d="M3 4l3-1v4zM8 5h2" stroke="#9cc8ec" fill="#9cc8ec"/><path d="M20 2L9 15" stroke="#ccd" stroke-width="2"/></svg>
      <i class="brk"></i>
      <svg class="q" viewBox="0 0 20 20"><rect x=".5" y=".5" width="19" height="22" rx="2" fill="#d8d8d8" stroke="#aaa"/><path d="M3 3h14v6H3zM3 11h14v8H3z" fill="#eee" stroke="#999"/><path d="M7 6h6M7 15h6" stroke="#777" stroke-width="2"/></svg>
      <i class="brk"></i>
    </div>
    <div class="tasks">
      <button><svg class="ic"><use href="#i-fox"/></svg>Связанные документы |...</button>
      <button><svg class="ic"><use href="#i-fox"/></svg>Дебет Плюс • Ответить - ...</button>
      <button><svg class="ic"><use href="#i-fox"/></svg>Дебет Плюс • Просмотр ...</button>
      <button><svg class="ic"><use href="#i-fox"/></svg>Справочник схем связа...</button>
      <button class="faded"><svg class="ic"><use href="#i-fox"/></svg>[Организация печати в ...</button>
      <button class="cur"><svg class="ic"><use href="#i-logo"/></svg>Дебет Плюс - Приватне</button>
    </div>
    <div class="tray"><i></i><b></b></div>
  </div>
</div>

<section class="dialog" role="dialog" aria-labelledby="dt">
  <header><i class="dot"></i><h2 id="dt">Open Resource</h2><button class="round" aria-label="Close"></button></header>
  <div class="content">
    <div class="line"><label for="pat">Select an item to open (? = any character, * = any string):</label><svg><use href="#i-flat"/></svg></div>
    <div class="pat"><input id="pat" type="text" value="export_docs_to_medoc.js"><svg><use href="#i-clear"/></svg></div>
    <span id="ml" class="ml">Matching items:</span>
    <div class="items" role="listbox" aria-labelledby="ml"></div>
    <div class="path"></div>
    <div class="btns"><button class="b">Cancel</button><button class="b" disabled>Open</button><button class="b arrow" disabled aria-label="Open menu"><svg><use href="#i-flat"/></svg></button></div>
  </div>
</section>

<div class="tip" role="tooltip">Защитить компьютер от<br>несанкционированного использования</div>
</body>
</html>
```
FILE: styles.css
```css
* { box-sizing: border-box; }
html, body { height: 100%; }
body { margin: 0; overflow: hidden; position: relative; background: #dcdcdc; color: #2a2a2a; font: 13px/20px "Open Sans", "Noto Sans", sans-serif; }
button, input, select { font: inherit; color: inherit; margin: 0; padding: 0; border: 0; background: none; outline: 0; min-width: 0; }
i { display: block; flex: none; }
svg { display: block; flex: none; }
.sprite { position: absolute; width: 0; height: 0; }
.ic { width: 16px; height: 16px; }
.dn { width: 8px; height: 8px; }

.app { height: 100%; display: flex; flex-direction: column; }
.top { background: linear-gradient(#fff 0, #e8e8e8 2px, #d2d2d2 100%); border-bottom: 1px solid #cacaca; }
.titlebar { display: flex; align-items: center; height: 24px; padding: 0 8px 0 13px; }
.titlebar h1 { flex: 1; margin: 0; text-align: center; font-size: 13px; line-height: 24px; color: #999; text-shadow: 1px 1px 0 #f8f8f8; white-space: nowrap; }
.dot { width: 8px; height: 8px; border-radius: 50%; background: #f4f4f4; border: 1px solid #ccc; }
.wbtns { display: flex; gap: 11px; }
.wbtns i { width: 13px; height: 13px; border-radius: 50%; background: #e6e6e6; border: 1px solid #d2d2d2; }
.menu { display: flex; gap: 10px; height: 20px; padding: 0 8px; }
.menu a { color: inherit; text-decoration: none; white-space: nowrap; }

.tools { display: flex; align-items: center; height: 30px; padding-left: 4px; }
.grip { width: 3px; height: 22px; margin: 0 3px; border-left: 2px solid #f8f8f8; border-right: 1px solid #999; }
.tb { display: flex; align-items: center; justify-content: center; width: 26px; height: 24px; flex: none; }
.tb svg { width: 16px; height: 16px; }
.tb.split { width: 35px; gap: 2px; }
.tb .dn { width: 8px; height: 8px; }
.cmd { display: flex; align-items: center; width: 149px; height: 24px; padding: 0 4px; margin: 0 1px 0 2px; background: #f7f7f7; border: 1px solid #999; border-radius: 3px; }
.cmd input { flex: 1; }
.cmd svg { width: 16px; height: 12px; color: #777; }
::placeholder { color: #999; opacity: 1; }
.persp { display: flex; align-items: center; gap: 2px; height: 26px; padding: 1px 1px 1px 3px; border: 1px solid #bbb; white-space: nowrap; }
.persp button { width: 23px; height: 22px; display: grid; place-items: center; background: linear-gradient(#f2f2f2, #dadada); border: 1px solid #999; }

.work { flex: 1; min-height: 0; display: grid; grid-template-columns: minmax(0, 1fr) 433px; gap: 3px; padding: 0 3px 0 5px; }
.folder { display: flex; flex-direction: column; min-width: 0; min-height: 0; border: 1px solid #999; border-radius: 7px 7px 0 0; }
.tabs { display: flex; height: 26px; }
.tab { display: flex; align-items: center; gap: 4px; padding: 0 3px; border-bottom: 1px solid #999; white-space: nowrap; flex: none; overflow: hidden; }
.tab.on { gap: 3px; background: linear-gradient(#e8e8e8, #e0e0e0); border-bottom-color: transparent; border-left: 1px solid #999; border-radius: 7px 0 0 0; }
.tab .x { width: 12px; height: 12px; }
.dim { color: #999; }
.curve { width: 33px; height: 26px; }
.t1 { width: 132px; }
.t2 { width: 154px; }
.t3 { width: 361px; margin-left: -15px; border-right: 1px solid #999; border-radius: 0 7px 0 0; }
.t4 { width: 255px; border-right: 1px solid #999; border-radius: 0 7px 0 0; }
.mm { flex: 1; display: flex; justify-content: flex-end; gap: 8px; padding: 6px 6px 0 0; border-bottom: 1px solid #999; }
.mm svg { width: 10px; height: 10px; }
.s1 { width: 98px; gap: 3px; }
.s2 { width: 121px; border-left: 1px solid #999; border-radius: 7px 0 0 0; gap: 2px; }
.tab.s3 { width: 137px; background: linear-gradient(#fafafa, #dcdcdc); }

.body { flex: 1; min-height: 0; display: grid; grid-template-columns: 408px minmax(0, 1fr); gap: 3px; padding: 2px 2px 3px; }
.left { display: flex; flex-direction: column; gap: 2px; min-height: 0; }
.find { display: flex; align-items: center; height: 28px; flex: none; padding: 0 8px 0 5px; border: 1px solid #bbb; }
.find input { flex: 1; margin-left: 5px; }
.mag { width: 18px; height: 16px; }
.plus { width: 14px; height: 14px; }
.vm { width: 10px; height: 6px; margin: 0 0 8px 14px; }
.treebox { flex: 1; min-height: 0; display: flex; background: #fff; border: 1px solid #bbb; }
.tree { flex: 1; min-width: 0; margin: 0; padding: 0; list-style: none; overflow: hidden; }
.tree li { display: flex; align-items: center; gap: 3px; height: 22px; padding-left: 23px; white-space: nowrap; }
.tree .root { padding-left: 1px; }
.tree .sel { background: linear-gradient(#a2b8cc, #869fb6); color: #f4f4f4; }
.vbar { width: 13px; padding: 1px; background: #e8e8e8; }
.vbar i { height: 665px; width: 11px; border: 1px solid #999; border-radius: 6px; background: linear-gradient(90deg, #dadada, #bcbcbc); }

.mid { display: flex; flex-direction: column; min-height: 0; border: 1px solid #bbb; }
.mid .hbar { margin-bottom: 1px; }
.bar { display: flex; align-items: center; height: 36px; padding: 2px 0 0 6px; flex: none; }
.bar label { white-space: nowrap; }
.more { width: 28px; height: 24px; padding-bottom: 4px; font-size: 14px; font-weight: 700; color: #000; text-align: center; }
.more.gap { width: 38px; padding-left: 16px; }
.push { width: 105px; }
.sel-wrap { display: grid; align-items: center; margin-left: 3px; flex: none; }
.sel-wrap select { grid-area: 1 / 1; appearance: none; width: 98px; height: 23px; padding-left: 5px; border: 1px solid #999; border-radius: 2px; background: linear-gradient(90deg, #dcdcdc 77px, #f4f4f4 80px); }
.sel-wrap svg { grid-area: 1 / 1; justify-self: end; width: 6px; height: 18px; margin-right: 6px; }
.er { width: 32px; }
.combo { display: flex; width: 98px; height: 23px; margin-right: 3px; border: 1px solid #aaa; border-radius: 2px; flex: none; }
.combo input { flex: 1; background: #f7f7f7; }
.combo button { width: 23px; display: grid; place-items: center; border-left: 1px solid #aaa; background: #d4d4d4; opacity: .8; }
.combo .dn { opacity: .5; }

.grid { flex: 1; min-height: 0; background: #f6f6f6; border: 1px solid #000; border-bottom: 0; overflow: hidden; }
.grid.open { border-right: 0; }
table { width: 100%; table-layout: fixed; border-collapse: separate; border-spacing: 0; }
.c18 { width: 18px; } .c40 { width: 40px; } .c46 { width: 46px; } .c50 { width: 50px; } .c100 { width: 100px; }
th { height: 22px; padding: 0; font-weight: 400; line-height: 20px; white-space: nowrap; overflow: hidden; background: #dcdcdc; border-right: 1px solid #000; border-bottom: 1px solid #000; box-shadow: inset 1px 1px 0 #fff, inset -1px -1px 0 #aaa; }
th.key { background: #b4bad4; }
th.cut { text-align: right; }
th:last-child { border-right: 0; }
th.wideh { padding-left: 32px; }
td { height: 20px; padding: 0 3px; line-height: 19px; white-space: nowrap; overflow: hidden; border-right: 1px solid #bbb; border-bottom: 1px solid #bbb; }
td:last-child { border-right: 0; }
tr.sel td { background: #94abc0; color: #f4f4f4; border-color: #94abc0; }
tr.sel td.cell { background: #dfe3f0; color: #222; border: 1px dotted #94abc0; border-left: 0; }
tr td.rh, tr.sel td.rh { padding: 2px; background: #dcdcdc; border-color: #000; box-shadow: inset 1px 1px 0 #fff; }
.rh i { width: 13px; height: 14px; border: 1px solid #8c8c60; border-right-color: #55552c; border-bottom-color: #55552c; }
.sel .rh i { background: #94abc0; }
td.c { text-align: center; }
td input { appearance: none; display: block; width: 13px; height: 13px; margin: 0 auto; border: 1px solid #8c8c60; border-right-color: #55552c; border-bottom-color: #55552c; position: relative; }
td input:checked::after { content: ""; position: absolute; left: 3px; top: 0; width: 4px; height: 8px; border: solid #222; border-width: 0 2px 2px 0; rotate: 40deg; }
.hbar { height: 13px; padding: 1px 0; background: linear-gradient(#dedede, #f0f0f0); flex: none; }
.hbar i { height: 11px; border: 1px solid #999; border-radius: 6px; background: linear-gradient(#dadada, #bcbcbc); }
.h1 { width: 71%; }
.h2 { width: 41%; }
.rbody { flex: 1; min-height: 0; display: flex; flex-direction: column; margin: 2px; border: 1px solid #bbb; }
.rb { padding-left: 7px; }
.rb.second { height: 26px; margin: -5px 0 5px; }
.rb .wide { width: 35px; margin-right: 3px; }
.rb .wide svg { margin-right: 8px; }
.rb .more { width: 31px; padding-left: 3px; }

.status { display: flex; align-items: center; height: 30px; padding: 0 0 2px 4px; flex: none; }
.status .ic { margin-left: 9px; }
.msg { flex: 1; margin-left: 43px; }
.rest { width: 316px; }

.taskbar { display: flex; height: 16px; overflow: hidden; background: linear-gradient(#eee, #989898); color: #111; flex: none; }
.launch { display: flex; align-items: flex-start; width: 212px; gap: 7px; padding-top: 2px; flex: none; border-right: 2px dotted #f4f4f4; }
.deb { width: 24px; height: 24px; margin-right: 16px; }
.brk { width: 3px; height: 20px; margin-top: 2px; border: 1px solid #777; border-right: 0; border-bottom: 0; }
.pager { display: grid; grid-template-columns: 17px 17px; gap: 1px; margin-right: 1px; }
.pager i { height: 12px; border: 1px solid #000; background: #e8e8e8; }
.pager .cur { background: #94b0cc; border-color: #94b0cc; }
.q { width: 20px; height: 20px; margin: 0 5px; }
.tasks { flex: 1; display: grid; grid-template-columns: repeat(6, minmax(0, 1fr)); }
.tasks button { display: flex; align-items: center; gap: 8px; height: 24px; padding-left: 10px; line-height: 24px; white-space: nowrap; overflow: hidden; }
.tasks .cur { background: linear-gradient(#ccc, #999); }
.faded .ic { opacity: .55; }
.tray { display: flex; width: 273px; padding-left: 6px; flex: none; }
.tray i { width: 7px; height: 26px; border-left: 2px dotted #f4f4f4; }
.tray b { width: 22px; height: 22px; margin-top: 1px; border-radius: 50%; background: #e87c30; }

.dialog { position: absolute; left: 542px; top: 282px; width: 600px; display: flex; flex-direction: column; background: linear-gradient(#e8e8e8, #dcdcdc 26px); border: 1px solid #555; border-radius: 7px 7px 0 0; box-shadow: 0 3px 20px 2px rgba(0, 0, 0, .65), inset 0 1px 0 #fff; }
.dialog header { display: flex; align-items: center; height: 24px; padding: 0 10px 0 13px; }
.dialog h2 { flex: 1; margin: 0; text-align: center; font-size: 13px; line-height: 20px; padding-bottom: 4px; }
.round { width: 14px; height: 14px; border-radius: 50%; border: 1px solid #bbb; background: #f6f6f6; }
.content { display: flex; flex-direction: column; padding: 13px 12px 14px; }
.line { display: flex; justify-content: space-between; align-items: center; height: 22px; padding-right: 8px; }
.line svg { width: 10px; height: 6px; color: #224; }
.pat { display: flex; align-items: center; justify-content: space-between; height: 23px; margin: 9px 1px 4px; padding: 0 4px; background: #f8f8f8; border: 1px solid #7c96ac; border-radius: 2px; }
.pat input { field-sizing: content; height: 16px; line-height: 16px; border-right: 1px solid #000; }
.pat svg { width: 15px; height: 11px; color: #333; }
.ml { line-height: 18px; margin-bottom: 4px; }
.items { height: 289px; background: #f7f7f7; border: 1px solid #bbb; }
.path { height: 23px; margin-top: 5px; border: 1px solid #999; }
.btns { display: flex; justify-content: flex-end; margin-top: 27px; padding-right: 1px; }
.b { width: 105px; height: 23px; margin-left: 9px; background: linear-gradient(#fff, #e2e2e2); border: 1px solid #888; border-radius: 2px; }
.b:disabled { background: #d2d2d2; color: #999; border-color: #aaa; }
.b.arrow { width: 18px; margin-left: 2px; display: grid; place-items: center; }
.b.arrow svg { width: 10px; height: 6px; }

.tip { position: absolute; right: 0; top: 1003px; padding: 3px 0 3px 2px; background: linear-gradient(#f2f2a8, #fcfcd0); border: 1px solid #c8c860; border-right: 0; color: #111; line-height: 15px; box-shadow: -2px 0 8px rgba(0, 0, 0, .4); }
```
